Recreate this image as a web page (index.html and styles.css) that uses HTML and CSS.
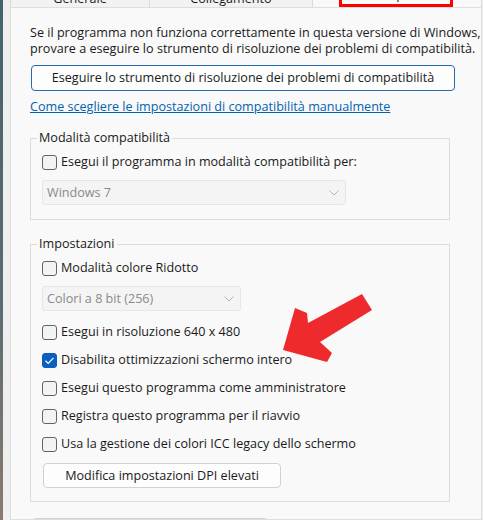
FILE: index.html
```html
<!DOCTYPE html>
<html lang="it">
<head>
    <meta charset="UTF-8">
    <meta name="viewport" content="width=device-width, initial-scale=1.0">
    <title>Proprietà - Compatibilità</title>
    <link rel="stylesheet" href="styles.css">
</head>
<body>
    <div class="wallpaper"></div>
    <div class="dialog">
        <div class="tabs">
            <div class="tab tab-general"><span>Generale</span></div>
            <div class="tab tab-link"><span>Collegamento</span></div>
            <div class="tab tab-compat"><span>Compatibilità</span></div>
            <div class="mark"></div>
        </div>
        <div class="panel">
            <p class="intro">Se il programma non funziona correttamente in questa versione di Windows,<br>provare a eseguire lo strumento di risoluzione dei problemi di compatibilità.</p>
            <button class="btn btn-default">Eseguire lo strumento di risoluzione dei problemi di compatibilità</button>
            <a class="link" href="#">Come scegliere le impostazioni di compatibilità manualmente</a>

            <fieldset class="group">
                <legend>Modalità compatibilità</legend>
                <div class="check"><span class="box"></span>Esegui il programma in modalità compatibilità per:</div>
                <div class="select select-os">
                    <span>Windows 7</span>
                    <svg width="10" height="6" viewBox="0 0 10 6"><path d="M0.5 0.5 L5 5 L9.5 0.5" fill="none" stroke="#b4b4b4" stroke-width="1"/></svg>
                </div>
            </fieldset>

            <fieldset class="group group-settings">
                <legend>Impostazioni</legend>
                <div class="check"><span class="box"></span>Modalità colore Ridotto</div>
                <div class="select select-colors">
                    <span>Colori a 8 bit (256)</span>
                    <svg width="10" height="6" viewBox="0 0 10 6"><path d="M0.5 0.5 L5 5 L9.5 0.5" fill="none" stroke="#b4b4b4" stroke-width="1"/></svg>
                </div>
                <div class="check"><span class="box"></span>Esegui in risoluzione 640 x 480</div>
                <div class="check">
                    <span class="box box-on">
                        <svg width="11" height="9" viewBox="0 0 11 9"><path d="M1.5 4.8 L4.2 7.3 L9.5 1.8" fill="none" stroke="#ffffff" stroke-width="1.2"/></svg>
                    </span>Disabilita ottimizzazioni schermo intero
                </div>
                <div class="check"><span class="box"></span>Esegui questo programma come amministratore</div>
                <div class="check"><span class="box"></span>Registra questo programma per il riavvio</div>
                <div class="check"><span class="box"></span>Usa la gestione dei colori ICC legacy dello schermo</div>
                <button class="btn btn-dpi">Modifica impostazioni DPI elevati</button>
            </fieldset>

            <button class="btn btn-users">Modifica impostazioni per tutti gli utenti</button>
        </div>
    </div>

    <!-- freccia di evidenziazione -->
    <svg class="arrow" width="95" height="75" viewBox="0 0 95 75">
        <polygon points="3,60 15,18 27,23 28,33 82,4 92,20 40,52 52,63 47,72" fill="#ee2a2d"/>
    </svg>
</body>
</html>
```

FILE: styles.css
```css
* {
    box-sizing: border-box;
}
body {
    margin: 0;
    width: 483px;
    height: 520px;
    overflow: hidden;
    display: flex;
    background: #efefef;
    font-family: "Open Sans", "Liberation Sans", sans-serif;
    font-size: 12.6px;
    line-height: 16px;
    color: #1a1a1a;
}
.wallpaper {
    width: 3px;
    flex: none;
    background: linear-gradient(#45626c, #5b6d70 60%, #8a7a70);
}
.dialog {
    flex: 1;
    display: flex;
    flex-direction: column;
    padding: 0 9px 0 7px;
}
.tabs {
    display: flex;
    height: 7px;
    position: relative;
}
.tab {
    height: 7px;
    border-left: 1px solid #dadada;
    background: #f2f2f2;
    text-align: center;
    white-space: nowrap;
}
.tab span {
    display: block;
    margin-top: -9px;
}
.tab-general { width: 139px; }
.tab-link { width: 163px; }
.tab-compat {
    flex: 1;
    text-align: left;
    padding-left: 56px;
    background: #f9f9f9;
    border-right: 1px solid #dadada;
}
.tab-compat span { margin-top: -13px; }
.mark {
    position: absolute;
    left: 329px;
    top: -20px;
    width: 114px;
    height: 27px;
    border: 3px solid #ff0000;
}
.panel {
    flex: 1;
    overflow: hidden;
    padding-left: 19px;
    background: #f9f9f9;
    border: 1px solid #dedede;
}
.intro {
    margin: 17px 0 0;
    white-space: nowrap;
}
.btn {
    display: block;
    font: inherit;
    color: inherit;
    padding: 0;
    height: 25px;
    background: #fdfdfd;
    border: 1px solid #d2d2d2;
    border-radius: 4px;
    text-align: center;
    white-space: nowrap;
}
.btn-default {
    margin: 8px 0 0 1px;
    width: 424px;
    height: 26px;
    border-color: #2a68ad;
}
.link {
    display: block;
    width: max-content;
    margin-top: 8px;
    color: #0063b1;
    text-decoration: underline;
}
.group {
    margin: 15px 0 0;
    width: 420px;
    min-inline-size: 0;
    padding: 8px 11px 14px;
    border: 1px solid #dcdcdc;
}
.group legend {
    padding: 0 2px;
    margin-left: -5px;
    line-height: 16px;
}
.group-settings {
    margin-top: 16px;
    padding-bottom: 13px;
}
.check {
    display: flex;
    align-items: center;
    gap: 4px;
    height: 16px;
    white-space: nowrap;
}
.check + .check { margin-top: 12px; }
.box {
    flex: none;
    width: 15px;
    height: 15px;
    border: 1px solid #646464;
    border-radius: 3px;
    background: #f3f3f3;
}
.box-on {
    display: flex;
    align-items: center;
    justify-content: center;
    background: #0d5fbe;
    border-color: #0d5fbe;
}
.select {
    display: flex;
    align-items: center;
    justify-content: space-between;
    margin-top: 10px;
    height: 25px;
    padding: 0 6px 0 4px;
    border: 1px solid #e6e6e6;
    border-radius: 3px;
    background: #f4f4f4;
    color: #8a8a8a;
}
.select-os { width: 304px; }
.select-colors { width: 199px; }
.select + .check { margin-top: 13px; }
.btn-dpi {
    margin: 11px 0 0 1px;
    width: 238px;
}
.btn-users {
    margin: 16px 0 0 2px;
    width: 236px;
    height: 26px;
}
.arrow {
    position: absolute;
    left: 280px;
    top: 290px;
}
```
